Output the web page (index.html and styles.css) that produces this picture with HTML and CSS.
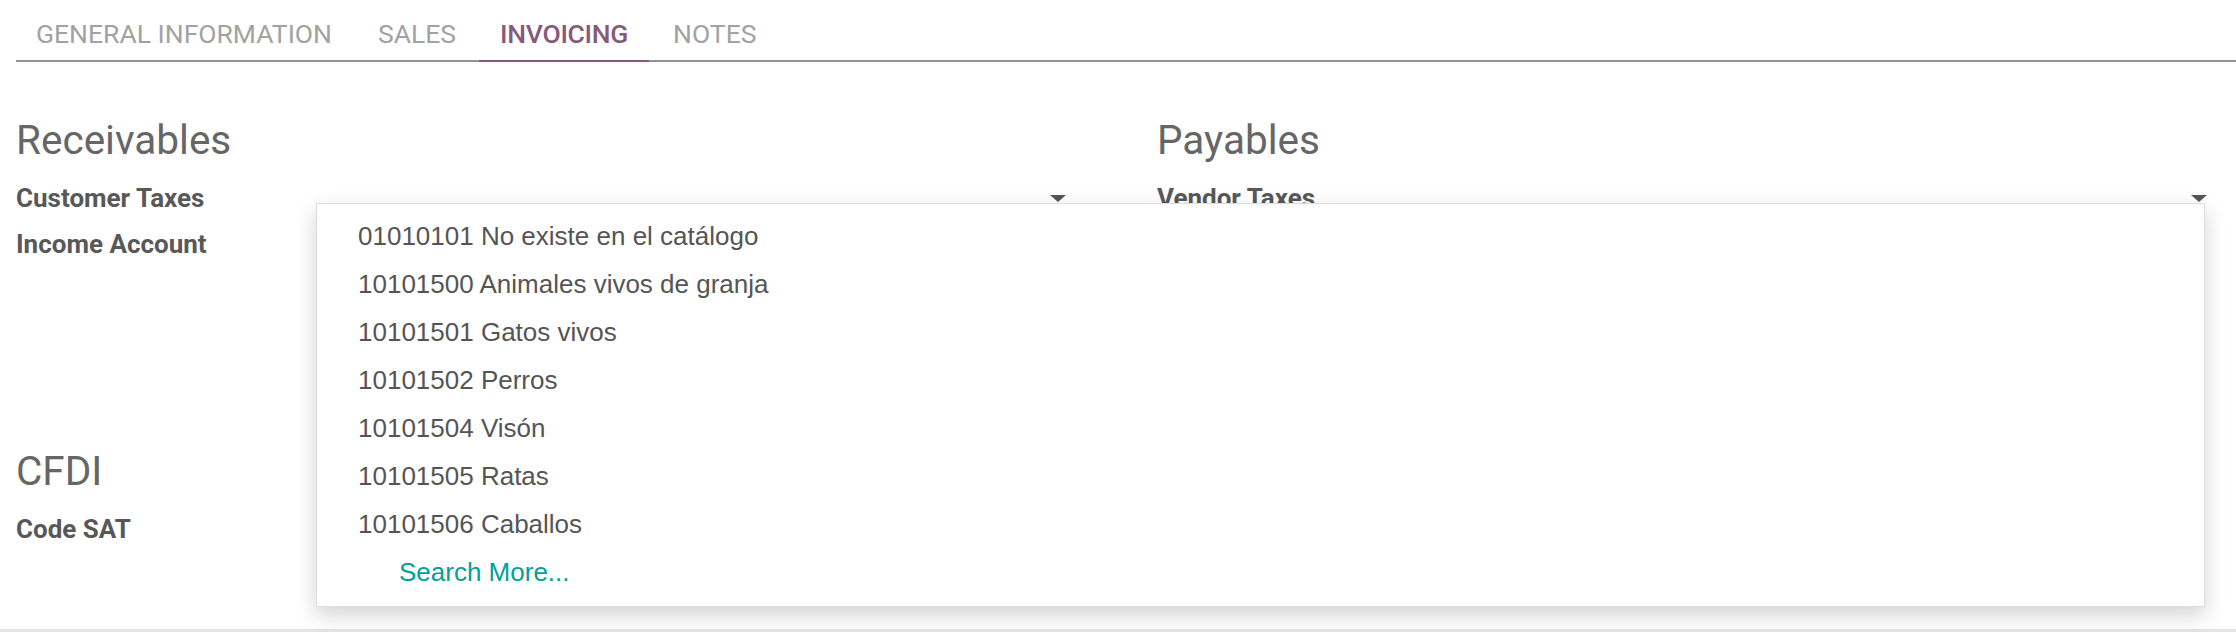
FILE: index.html
```html
<!DOCTYPE html>
<html lang="es">
<head>
<meta charset="utf-8">
<title>Invoicing</title>
<link rel="stylesheet" href="styles.css">
</head>
<body>
<div class="sheet">
  <ul class="tabs">
    <li class="tab"><a>GENERAL INFORMATION</a></li>
    <li class="tab"><a>SALES</a></li>
    <li class="tab active"><a>INVOICING</a></li>
    <li class="tab"><a>NOTES</a></li>
  </ul>

  <div class="columns">
    <div class="col">
      <h2 class="sep">Receivables</h2>
      <div class="field-row">
        <div class="label">Customer Taxes</div>
        <div class="input"><span class="caret"></span></div>
      </div>
      <div class="field-row">
        <div class="label">Income Account</div>
        <div class="input"></div>
      </div>
      <h2 class="sep sep-cfdi">CFDI</h2>
      <div class="field-row">
        <div class="label">Code SAT</div>
        <div class="input"></div>
      </div>
    </div>
    <div class="col">
      <h2 class="sep">Payables</h2>
      <div class="field-row">
        <div class="label">Vendor Taxes</div>
        <div class="input"><span class="caret"></span></div>
      </div>
    </div>
  </div>

  <ul class="autocomplete">
    <li class="item">01010101 No existe en el catálogo</li>
    <li class="item">10101500 Animales vivos de granja</li>
    <li class="item">10101501 Gatos vivos</li>
    <li class="item">10101502 Perros</li>
    <li class="item">10101504 Visón</li>
    <li class="item">10101505 Ratas</li>
    <li class="item">10101506 Caballos</li>
    <li class="item more">Search More...</li>
  </ul>
</div>
</body>
</html>
```
FILE: styles.css
```css
html, body {
  margin: 0;
  padding: 0;
  background: #ffffff;
  overflow: hidden;
}

.sheet {
  position: relative;
  width: 2236px;
  height: 632px;
  box-sizing: border-box;
  padding-left: 16px;
  border-bottom: 3px solid #e4e4e4;
  font-family: Roboto, "Liberation Sans", sans-serif;
}

.tabs {
  list-style: none;
  margin: 0;
  padding: 0;
  display: flex;
  border-bottom: 2px solid #929292;
}

.tab a {
  display: block;
  padding: 19px 23px 11px;
  font-size: 26.5px;
  line-height: 30px;
  color: #a2a2a2;
}

.tab:first-child a {
  padding-left: 20px;
}

.tab.active a {
  color: #875a7b;
  font-weight: 500;
  letter-spacing: -0.3px;
  padding-left: 21px;
  padding-right: 21px;
  border-bottom: 2px solid #875a7b;
  margin-bottom: -2px;
}

.tab.active + .tab a {
  padding-left: 24px;
}

.columns {
  display: grid;
  grid-template-columns: 1141px 1fr;
}

.sep {
  margin: 54px 0 11px;
  font-size: 40.5px;
  line-height: 48px;
  font-weight: 400;
  color: #666666;
}

.sep-cfdi {
  margin-top: 180px;
}

.field-row {
  display: grid;
  grid-template-columns: 300px 750px;
  height: 46px;
}

.label {
  font-size: 26px;
  line-height: 46px;
  font-weight: 700;
  color: #585858;
  white-space: nowrap;
}

.input {
  display: flex;
  justify-content: flex-end;
  padding-top: 20px;
  box-sizing: border-box;
}

.caret {
  width: 0;
  height: 0;
  border-left: 8px solid transparent;
  border-right: 8px solid transparent;
  border-top: 7px solid #555555;
}

.autocomplete {
  position: absolute;
  left: 316px;
  top: 203px;
  width: 1889px;
  box-sizing: border-box;
  margin: 0;
  padding: 8px 0 10px;
  list-style: none;
  background: #ffffff;
  border: 1px solid #dddddd;
  box-shadow: 0 8px 20px rgba(0, 0, 0, 0.18);
  font-family: "Liberation Sans", Arial, sans-serif;
}

.item {
  padding-left: 41px;
  font-size: 26px;
  line-height: 48px;
  color: #555555;
  white-space: nowrap;
}

.item.more {
  padding-left: 82px;
  color: #00a09d;
}
```
